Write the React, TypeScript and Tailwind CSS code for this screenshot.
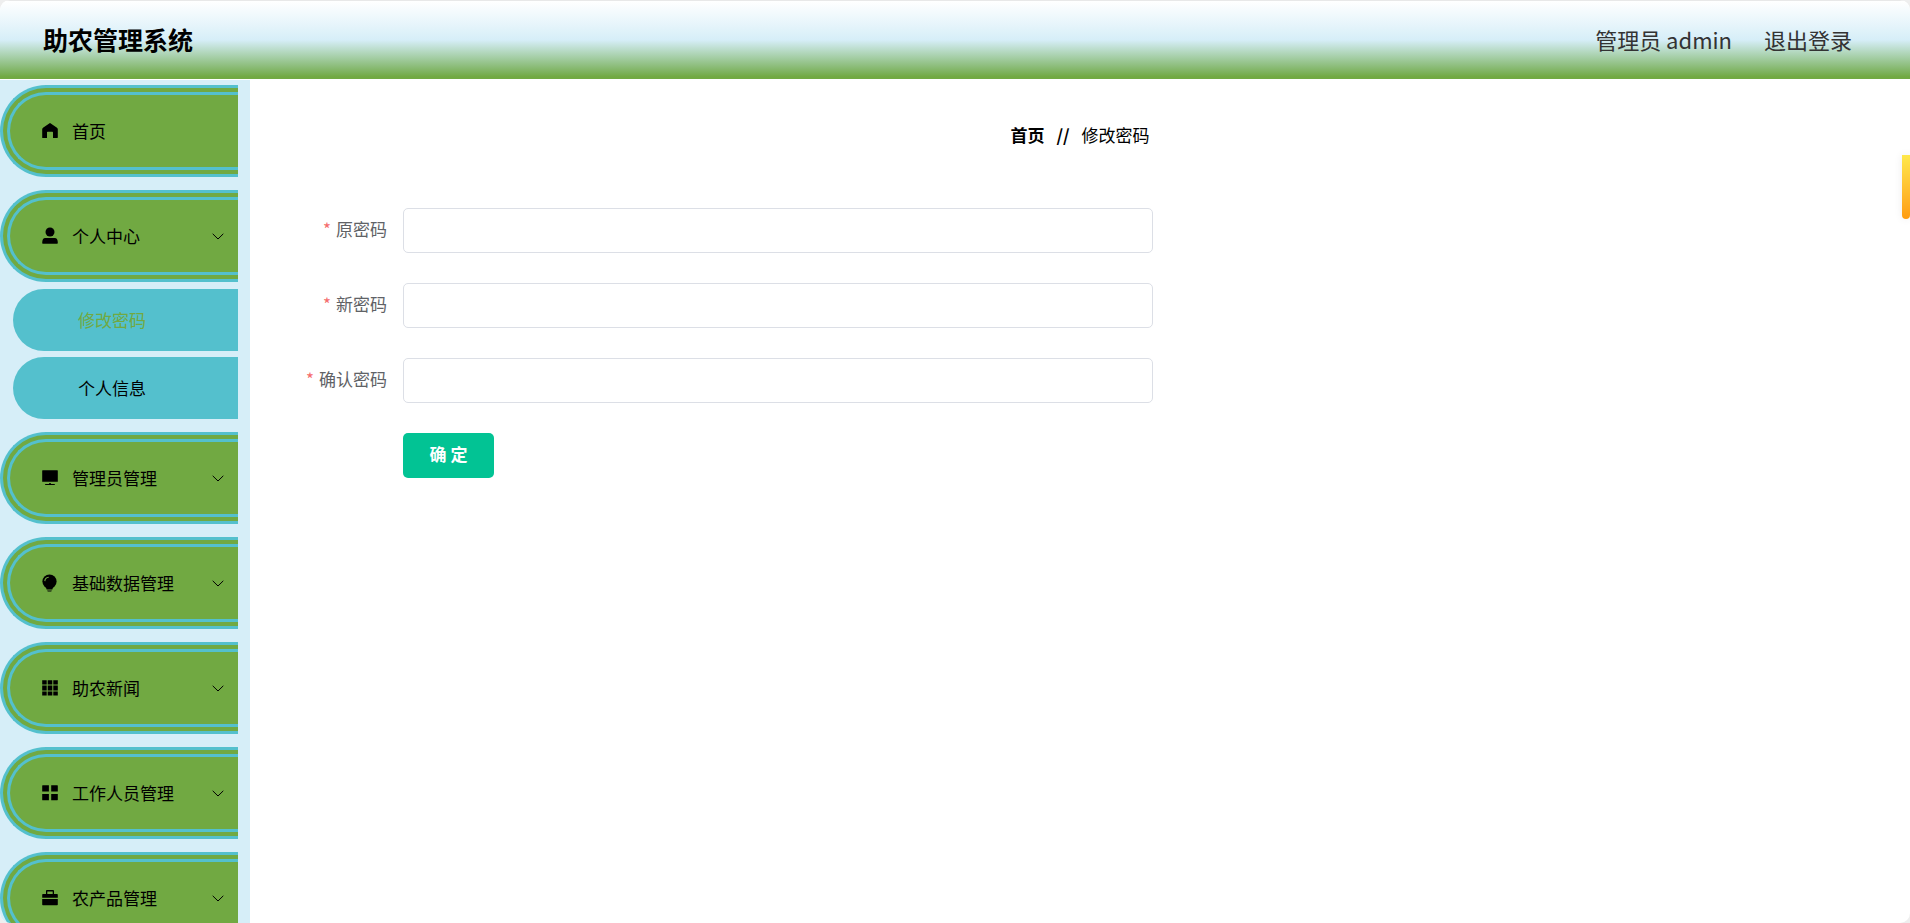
import type { ReactNode } from 'react'

const TITLE = '助农管理系统'

function Icon({ children }: { children: ReactNode }) {
  return (
    <svg viewBox="0 0 18 18" className="size-[18px] shrink-0" fill="currentColor" aria-hidden="true">
      {children}
    </svg>
  )
}

const icons: Record<string, ReactNode> = {
  home: <path d="M8.2 1.4a1.3 1.3 0 0 1 1.6 0l6.2 4.4c.5.4.8.9.8 1.5v8.2c0 .3-.2.5-.5.5H12v-5.600a.6.6 0 0 0-.6-.6H6.600a.6.6 0 0 0-.6.6V16H1.700a.5.5 0 0 1-.5-.5V7.300c0-.6.3-1.100.8-1.500z" />,
  user: (
    <>
      <circle cx="9" cy="5" r="4.5" />
      <path d="M1.200 15.700c0-3 1-4.700 3-4.700h9.600c2 0 3 1.700 3 4.700 0 .7-.3 1.100-1 1.100H2.200c-.7 0-1-.4-1-1.100z" />
    </>
  ),
  platform: <path d="M1.700 1.200h14.600c.3 0 .5.2.5.5v11.100H1.200V1.700c0-.3.2-.5.5-.5zM8.200 14h1.600v1h3.700c.3 0 .5.2.5.5s-.2.5-.5.5h-9a.5.5 0 0 1 0-1h3.700z" />,
  bulb: (
    <>
      <circle cx="8.500" cy="7.600" r="7.100" />
      <path d="M4.200 12h8.600c0 1.700-1.400 1.700-1.400 3.500H5.600c0-1.800-1.400-1.800-1.400-3.500zM6.200 16.400h4.600c0 .7-.3 1.100-.9 1.100H7.100c-.6 0-.9-.4-.9-1.100z" />
      <path d="M3.800 7.100c.2-2.200 1.600-3.700 3.900-3.900" fill="none" stroke="#71a942" strokeWidth="1.100" />
    </>
  ),
  grid: <path d="M1.200 1.200h4.500v4.200H1.200zM6.700 1.200h4.600v4.200H6.700zM12.300 1.200h4.500v4.200h-4.500zM1.200 6.400h4.500v5H1.200zM6.700 6.400h4.600v5H6.700zM12.300 6.400h4.500v5h-4.500zM1.200 12.400h4.500v4.100H1.200zM6.700 12.400h4.600v4.100H6.700zM12.300 12.400h4.500v4.100h-4.500z" />,
  menu: <path d="M1.700 1.200h6.200v6.300H1.200V1.700c0-.3.2-.5.5-.5zM10.200 1.200h6.100c.3 0 .5.2.5.5v5.800h-6.600zM1.200 10h6.700v6.300H1.700a.5.5 0 0 1-.5-.5zM10.200 10h6.600v5.800c0 .3-.2.5-.5.5h-6.100z" />,
  bag: <path fillRule="evenodd" d="M5 5V2c0-.6.3-.9.9-.9h6.200c.6 0 .9.3.9.9v3h3.100c.4 0 .7.3.7.7v3H1.200v-3c0-.4.3-.7.7-.7zM6.300 5h5.400V2.400H6.300zM1.200 9.900h15.600v5.700c0 .4-.3.700-.7.700H1.900a.7.700 0 0 1-.7-.7z" />,
}

const menu = [
  { label: '首页', icon: 'home' },
  { label: '个人中心', icon: 'user', children: ['修改密码', '个人信息'] },
  { label: '管理员管理', icon: 'platform', children: [] },
  { label: '基础数据管理', icon: 'bulb', children: [] },
  { label: '助农新闻', icon: 'grid', children: [] },
  { label: '工作人员管理', icon: 'menu', children: [] },
  { label: '农产品管理', icon: 'bag', children: [] },
]

const fields = [
  { id: 'password', label: '原密码' },
  { id: 'newpassword', label: '新密码' },
  { id: 'repassword', label: '确认密码' },
]

function Header() {
  return (
    <header className="flex h-[79px] shrink-0 items-center justify-between border-t border-[#e8e8e8] bg-linear-to-b from-white via-[#d6eef8] to-[#71a942] to-97% pr-[58px] pl-[43px]">
      <h1 className="text-[25px] font-bold text-black">{TITLE}</h1>
      <div className="flex items-center gap-8 pb-0.5 text-[22px] leading-8 text-[#333]">
        <span>管理员 admin</span>
        <button type="button" className="cursor-pointer">退出登录</button>
      </div>
    </header>
  )
}

function Sidebar() {
  return (
    <nav className="w-[250px] shrink-0 overflow-hidden bg-[#d6eef8] pt-[5px] pr-3">
      <ul className="grid gap-[13px]">
        {menu.map((item) => (
          <li key={item.label}>
            <button
              type="button"
              className="flex h-[92px] w-full cursor-pointer items-center rounded-l-[46px] border-[10px] border-r-0 border-double border-[#54c0cd] bg-[#71a942] pr-[14px] pl-[31px] text-[17px] text-black"
            >
              <Icon>{icons[item.icon]}</Icon>
              <span className="ml-[13px]">{item.label}</span>
              {item.children ? (
                <svg viewBox="0 0 12 8" className="ml-auto h-2 w-3" fill="none" stroke="currentColor" aria-hidden="true">
                  <path d="M.7 1.800 6 7l5.300-5.200" />
                </svg>
              ) : null}
            </button>
            {item.children?.length ? (
              <ul className="mt-[7px] ml-[13px] grid gap-[6px]">
                {item.children.map((child, i) => (
                  <li key={child}>
                    <a
                      href="#"
                      className={`flex h-[62px] items-center rounded-l-[31px] bg-[#54c0cd] pl-[65px] text-[17px] ${i === 0 ? 'text-[#71a942]' : 'text-black'}`}
                    >
                      {child}
                    </a>
                  </li>
                ))}
              </ul>
            ) : null}
          </li>
        ))}
      </ul>
    </nav>
  )
}

function PasswordForm() {
  return (
    <form className="mt-[58px] grid gap-[30px] pl-[30px]" onSubmit={(e) => e.preventDefault()}>
      {fields.map((field) => (
        <div key={field.id} className="flex items-start gap-4">
          <label htmlFor={field.id} className="w-[107px] text-right text-[17px] leading-[42px] text-[#606266]">
            <span className="mr-[5px] text-[#f56c6c]">*</span>
            {field.label}
          </label>
          <input
            id={field.id}
            type="password"
            className="h-[45px] max-w-[750px] flex-1 rounded-[5px] border border-[#dcdfe6] bg-white px-4 text-[17px] outline-none focus:border-[#02c394]"
          />
        </div>
      ))}
      <button type="submit" className="ml-[123px] h-[45px] w-[91px] cursor-pointer rounded-[5px] bg-[#02c394] pb-1 text-[17px] font-bold text-white">
        确 定
      </button>
    </form>
  )
}

export default function App() {
  return (
    <div className="h-screen bg-[#eee] font-['Noto_Sans_CJK_SC',sans-serif]">
      <div className="flex h-full flex-col overflow-hidden rounded-[10px] bg-white">
        <Header />
        <div className="mt-px flex min-h-0 flex-1">
          <Sidebar />
          <main className="flex-1 pt-10">
            <div className="flex h-[30px] items-center justify-center gap-3 text-[17px] text-black">
              <a href="#" className="font-bold">首页</a>
              <span className="font-bold">//</span>
              <span>修改密码</span>
            </div>
            <PasswordForm />
          </main>
        </div>
      </div>
      <div className="fixed top-[155px] right-0 h-16 w-2 rounded-b-[4px] bg-linear-to-b from-[#ffe84a] to-[#ff9c0f] shadow-[0_0_8px_rgba(0,0,0,0.08)]" />
    </div>
  )
}
